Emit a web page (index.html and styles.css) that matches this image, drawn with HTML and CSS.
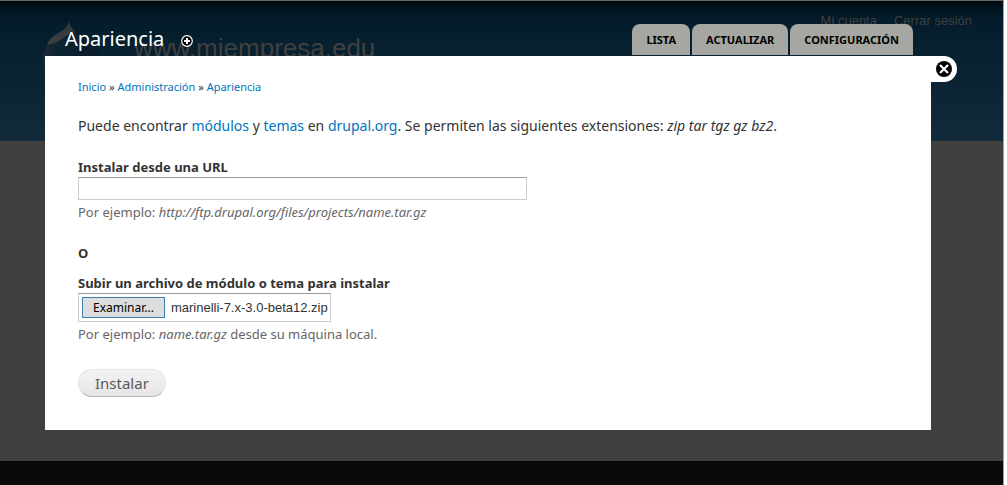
FILE: index.html
```html
<!DOCTYPE html>
<html lang="es">
<head>
<meta charset="utf-8">
<title>Apariencia</title>
<link rel="stylesheet" href="styles.css">
</head>
<body>
<div class="site">
  <header class="site-header">
    <div class="site-brand">
      <svg class="site-logo" width="57" height="66" viewBox="0 0 57 66" aria-hidden="true">
        <defs>
          <linearGradient id="drop" x1="0" y1="0" x2="1" y2="0">
            <stop offset="0" stop-color="#1c2a33"/>
            <stop offset="0.3" stop-color="#0a2433"/>
            <stop offset="1" stop-color="#0b1b27"/>
          </linearGradient>
          <linearGradient id="shine" x1="1" y1="0" x2="0" y2="1">
            <stop offset="0" stop-color="#30373b"/>
            <stop offset="1" stop-color="#404040"/>
          </linearGradient>
        </defs>
        <path fill="url(#drop)" d="M26 0C28 9 35 12 43 17C52 23 57 31 57 41C57 56 44 66 28 66C12 66 0 55 0 39C0 29 5 22 12 16C19 11 25 8 26 0Z"/>
        <path fill="url(#shine)" d="M26 0C27 5 29 8 32 10C27 11 24 15 19 18C13 22 8 23 4 24C6 18 12 14 17 11C22 8 25 5 26 0Z"/>
      </svg>
      <span class="site-name">www.miempresa.edu</span>
    </div>
    <nav class="account">
      <a href="#">Mi cuenta</a>
      <a href="#">Cerrar sesión</a>
    </nav>
  </header>
  <div class="site-main"></div>
  <footer class="site-footer"></footer>
</div>

<div class="overlay" role="dialog" aria-labelledby="overlay-title">
  <div class="titlebar">
    <h1 class="title" id="overlay-title">Apariencia</h1>
    <button class="icon-button shortcut" type="button" aria-label="Añadir a los atajos">
      <svg width="12" height="12" viewBox="0 0 12 12"><circle cx="6" cy="6" r="5.3" fill="#000" stroke="#fff" stroke-width="1.2"/><path d="M6 3v6M3 6h6" stroke="#fff" stroke-width="2"/></svg>
    </button>
    <nav class="tabs">
      <a class="tab" href="#">LISTA</a>
      <a class="tab" href="#">ACTUALIZAR</a>
      <a class="tab" href="#">CONFIGURACIÓN</a>
    </nav>
  </div>
  <div class="panel-row">
    <main class="panel">
      <nav class="breadcrumb"><a href="#">Inicio</a> » <a href="#">Administración</a> » <a href="#">Apariencia</a></nav>
      <p class="intro">Puede encontrar <a href="#">módulos</a> y <a href="#">temas</a> en <a href="#">drupal.org</a>. Se permiten las siguientes extensiones: <em>zip tar tgz gz bz2</em>.</p>
      <form class="form">
        <label class="label" for="url">Instalar desde una URL</label>
        <input class="text-field" id="url" type="text">
        <p class="hint">Por ejemplo: <em>http://ftp.drupal.org/files/projects/name.tar.gz</em></p>
        <p class="or">O</p>
        <label class="label" for="upload">Subir un archivo de módulo o tema para instalar</label>
        <div class="file-field">
          <input class="file-input" id="upload" type="file">
          <label class="browse" for="upload">Examinar...</label>
          <output class="file-name" for="upload">marinelli-7.x-3.0-beta12.zip</output>
        </div>
        <p class="hint">Por ejemplo: <em>name.tar.gz</em> desde su máquina local.</p>
        <button class="submit" type="button">Instalar</button>
      </form>
    </main>
    <button class="icon-button close" type="button" aria-label="Cerrar">
      <svg width="16" height="16" viewBox="0 0 16 16"><circle cx="8" cy="8" r="8" fill="#000"/><path d="M4 4l8 8M12 4l-8 8" stroke="#fff" stroke-width="2.2"/></svg>
    </button>
  </div>
</div>
</body>
</html>
```
FILE: styles.css
```css
* {
  box-sizing: border-box;
}

body {
  margin: 0;
  position: relative;
  background: #fff;
  color: #333;
  font-family: "Noto Sans", "Open Sans", sans-serif;
  font-size: 13px;
}

a {
  color: #0074bd;
  text-decoration: none;
}

/* Dimmed page below the overlay */
.site {
  display: flex;
  flex-direction: column;
  min-height: 100vh;
  margin-right: 3px;
  border-top: 1px solid #686868;
  border-right: 1px solid #a0a0a0;
  background: #404040;
  font-family: "Liberation Sans", Arial, sans-serif;
}

.site-header {
  display: flex;
  justify-content: space-between;
  align-items: flex-start;
  height: 140px;
  padding: 12px 31px 0 43px;
  background: linear-gradient(#010b10, #031a29 14px, #06202f 40px, #122a39);
}

.site-brand {
  display: flex;
  gap: 34px;
  padding-top: 8px;
}

.site-name {
  padding-top: 12px;
  color: #404040;
  font-size: 26px;
  line-height: 30px;
}

.account {
  display: flex;
  gap: 17px;
}

.account a {
  color: #404040;
  font-size: 13px;
  line-height: 16px;
}

.site-main {
  flex: 1;
}

.site-footer {
  height: 24px;
  background: #0a0a0a;
}

/* Overlay */
.overlay {
  position: absolute;
  top: 0;
  left: 0;
  right: 4px;
  padding: 24px 46px 0 45px;
}

.titlebar {
  display: flex;
  align-items: flex-start;
  height: 32px;
  padding: 0 44px 0 20px;
}

.title {
  margin: 0;
  color: #fff;
  font-size: 20px;
  font-weight: 400;
  line-height: 30px;
}

.icon-button {
  display: flex;
  padding: 0;
  border: 0;
  background: none;
  cursor: pointer;
}

.shortcut {
  margin: 11px 0 0 17px;
}

.tabs {
  display: flex;
  gap: 2px;
  margin-left: auto;
}

.tab {
  padding: 0 14px;
  border-radius: 8px 8px 0 0;
  background: #a6a7a2;
  color: #000;
  font-size: 11px;
  font-weight: 700;
  line-height: 31px;
}

.panel-row {
  display: flex;
  align-items: flex-start;
}

.panel {
  flex: 1;
  padding: 22px 33px 33px;
  background: #fff;
}

.close {
  width: 26px;
  height: 26px;
  padding: 5px;
  border-radius: 0 13px 13px 0;
  background: #fff;
}

.breadcrumb {
  font-size: 11px;
  line-height: 18px;
}

.intro {
  margin: 20px 0 21px;
  font-size: 14px;
  line-height: 20px;
}

.form {
  display: flex;
  flex-direction: column;
  align-items: flex-start;
}

.label,
.or {
  margin: 0;
  font-weight: 700;
  line-height: 20px;
}

.text-field {
  width: 449px;
  max-width: 100%;
  height: 23px;
  padding: 2px;
  border: 1px solid #ccc;
  border-top-color: #999;
  background: #fff;
}

.hint {
  margin: 3px 0 0;
  color: #666;
  font-size: 13px;
  line-height: 18px;
}

.or {
  margin: 22px 0 10px;
}

.file-field {
  position: relative;
  display: flex;
  align-items: center;
  gap: 6px;
  padding: 3px 2px 3px 3px;
  border: 1px solid #ccc;
  border-top-color: #999;
}

.file-input {
  position: absolute;
  inset: 0;
  width: 100%;
  opacity: 0;
}

.browse {
  padding: 0 10px;
  border: 1px solid #3c7fb1;
  background: #ddd;
  color: #000;
  font-size: 12px;
  line-height: 19px;
}

.file-name {
  font-family: "Liberation Sans", Arial, sans-serif;
  font-size: 13px;
}

.submit {
  height: 28px;
  margin-top: 26px;
  padding: 0 16px;
  border: 1px solid #e4e4e4;
  border-bottom-color: #b4b4b4;
  border-radius: 14px;
  background: linear-gradient(#f3f3f3, #e6e6e6);
  color: #5a5a5a;
  font-family: inherit;
  font-size: 15px;
}
```
